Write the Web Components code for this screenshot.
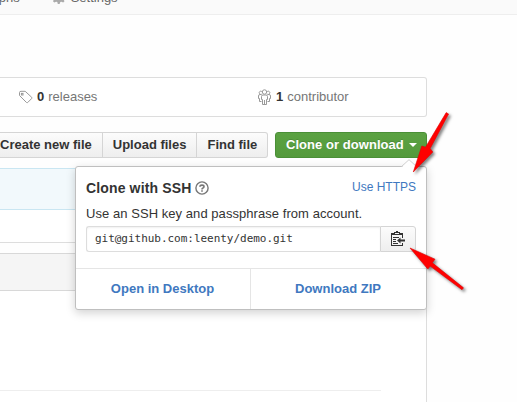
<!DOCTYPE html>
<html lang="en">
<head>
<meta charset="utf-8">
<title>Clone or download</title>
<style>
html,body{margin:0;background:#fefefe}
body{width:517px;height:402px;overflow:hidden;font:13px/18px "Liberation Sans",Arial,sans-serif;color:#333}
</style>
</head>
<body>
<repo-page></repo-page>
<script>
function define(name, markup){
  customElements.define(name, class extends HTMLElement{
    constructor(){
      super();
      const t=document.createElement('template');
      t.innerHTML=markup;
      this.attachShadow({mode:'open'}).append(t.content.cloneNode(true));
    }
  });
}

define('repo-nav',`<style>
:host{display:flex;align-items:flex-end;height:14px;box-sizing:content-box;background:#fafafa;border-bottom:1px solid #eee;overflow:hidden;color:#666}
.tabs{display:flex;align-items:center;margin:0 0 7px -23px;height:18px;line-height:18px}
svg{margin:0 5px 2px 32px;display:block}
</style>
<div class="tabs"><span>Graphs</span><svg width="14" height="16" viewBox="0 0 14 16" fill="#aaa"><path fill-rule="evenodd" d="M14 8.8V7l-2-.6-.4-1.100.9-1.800L11.200 2.200l-1.800.9-1.100-.4L7.600.700H5.800l-.5 2-1.200.4-1.800-.9L1 3.500l.9 1.800-.4 1.100-2 .6v1.800l2 .6.4 1.100L1 12.300l1.300 1.300 1.800-.9 1.200.4.5 2h1.800l.7-2 1.100-.4 1.800.9 1.300-1.300-.9-1.800.4-1.100zM6.800 11a3 3 0 110-6 3 3 0 010 6z"/></svg><span>Settings</span></div>`);

define('stat-item',`<style>
:host{display:flex;align-items:center;color:#767676}
b{color:#333;margin-right:4px}
::slotted(svg){display:block;margin-right:4px}
</style><slot name="icon"></slot><b><slot name="count"></slot></b><span><slot></slot></span>`);

define('stats-bar',`<style>
:host{display:grid;grid-template-columns:238px 1fr;align-items:center;height:40px;box-sizing:border-box;border:1px solid #ddd;border-left:0;border-radius:0 3px 3px 0;padding-left:18px;background:#fff}
</style>
<stat-item><svg slot="icon" width="15" height="16" viewBox="0 0 15 16" fill="none" stroke="#999" stroke-width="1"><path d="M1.500 3.500v3l7 7q.6.500 1.200 0l4-4q.500-.6 0-1.200l-6.500-6H3Q1.500 2.300 1.500 3.500z"/><rect x="3.400" y="4.400" width="1.600" height="1.600"/></svg><span slot="count">0</span>releases</stat-item>
<stat-item><svg slot="icon" width="16" height="16" viewBox="0 0 16 16" fill="none" stroke="#999" stroke-width="1"><path d="M6.500 15.500v-5h-1v-3q0-1.500 1.500-1.500h3q1.500 0 1.500 1.500v3h-1v5zM5.500 12.500h-2v-3h-1V7Q2.500 5.500 4 5.500h1.500M11.500 12.500h2v-3h1V7q0-1.500-1.500-1.500h-1.500M8.500 11v4"/><circle cx="8.500" cy="3" r="2.200"/><path d="M5.500 5.200a1.600 1.600 0 11.300-2.700M11.500 5.200a1.600 1.600 0 10-.3-2.700"/></svg><span slot="count">1</span>contributor</stat-item>`);

define('tool-button',`<style>
:host{display:block;box-sizing:border-box;height:26px;padding:0 10px;font-weight:700;line-height:24px;white-space:nowrap;color:#333;border:1px solid #d5d5d5;border-left:0;background:linear-gradient(#fcfcfc,#eee)}
:host([last]){border-radius:0 3px 3px 0}
:host([primary]){display:flex;align-items:center;gap:5px;margin-left:auto;color:#fff;border:1px solid #4a8f37;border-radius:3px;background:linear-gradient(#5ba242,#549a3c);text-shadow:0 -1px 0 rgba(0,0,0,.15);width:152px}
:host([primary]) span{letter-spacing:.05px}
i{display:none;border:4px solid transparent;border-top-color:#fff;border-bottom:0}
:host([primary]) i{display:block}
</style><span><slot></slot></span><i></i>`);

define('tool-row',`<style>
:host{display:flex;height:26px}
.first{margin-left:-10px}
</style>
<tool-button class="first">Create new file</tool-button><tool-button>Upload files</tool-button><tool-button last>Find file</tool-button><tool-button primary>Clone or download</tool-button>`);

define('file-panels',`<style>
:host{display:block}
div{box-sizing:border-box;border-right:1px solid #ddd}
.commit{height:42px;background:#f2f9fc;border:1px solid #c9e6f2;border-left:0;border-radius:0 3px 0 0}
.files{height:33px;border-bottom:1px solid #ddd;background:#fff}
.head{margin-top:10px;height:38px;background:#f5f5f5;border:1px solid #d8d8d8;border-left:0;border-radius:0 3px 0 0}
.readme{height:112px;padding:99px 45px 0 0;background:#fff}
hr{margin:0;border:0;height:1px;background:#eee}
</style><div class="commit"></div><div class="files"></div><div class="head"></div><div class="readme"><hr></div>`);

define('clone-popover',`<style>
:host{display:flex;flex-direction:column;box-sizing:border-box;width:352px;height:144px;border:1px solid #bfbfbf;border-radius:3px;background:#fff;box-shadow:0 3px 10px rgba(0,0,0,.18);position:relative}
.caret{position:absolute;right:9px;top:-8px;display:block}
.body{flex:none;height:101px;box-sizing:border-box;padding:11px 10px 0}
.title{display:flex;align-items:center;height:20px}
h4{font-size:14px;line-height:20px;margin:0;letter-spacing:.14px}
.title svg{margin-left:4px}
a{color:#4078c0}
.title a{margin-left:auto;font-size:12px;position:relative;top:-1px}
p{margin:7px 0 3px;line-height:18px;white-space:nowrap;letter-spacing:.055px}
.field{display:flex;height:26px}
.url{flex:1;box-sizing:border-box;border:1px solid #ddd;border-right:0;border-radius:3px 0 0 3px;padding-left:8px;font:11px/24px "DejaVu Sans Mono",monospace;letter-spacing:-.03px;box-shadow:inset 0 1px 2px rgba(0,0,0,.06)}
.copy{width:36px;box-sizing:border-box;border:1px solid #d5d5d5;border-radius:0 3px 3px 0;background:linear-gradient(#fcfcfc,#eee);display:grid;place-items:center}
.actions{display:grid;grid-template-columns:174px 1fr;flex:1;border-top:1px solid #e5e5e5;text-align:center;font-weight:700;line-height:40px}
.actions a+a{border-left:1px solid #e5e5e5}
.actions a{padding-right:1px}
</style>
<svg class="caret" width="16" height="9" viewBox="0 0 16 9"><path d="M1 9V8L8 1l7 7v1z" fill="#fff"/><path d="M.5 7.500L8 .7l7.500 6.800" fill="none" stroke="#d0d0d0"/></svg>
<div class="body">
<div class="title"><h4>Clone with SSH</h4><svg width="14" height="14" viewBox="0 0 14 14" fill="none" stroke="#777" stroke-width="1.400"><circle cx="7" cy="7" r="6.100"/><path d="M4.900 5.800Q5 4.100 7 4.100t2 1.600Q9 6.600 7.600 7.200 7 7.500 7 8.500M7 9.300v1.500" stroke-width="1.600"/></svg><a>Use HTTPS</a></div>
<p>Use an SSH key and passphrase from account.</p>
<div class="field"><div class="url">git@github.com:leenty/demo.git</div><div class="copy"><svg width="14" height="16" viewBox="0 0 14 16" fill="#333"><path d="M0 2h3V1h2V0h2v1h2v1h3v5h-1V4H1v10h10v-2h1v3H0z"/><path d="M4 2h4v1H4z" fill="#f6f6f6"/><path d="M2 6h6v1H2zM2 8h3v1H2zM2 10h3v1H2zM2 12h5v1H2zM6 9.500L9.500 6.500v2H14v2H9.500v2z"/></svg></div></div>
</div>
<div class="actions"><a>Open in Desktop</a><a>Download ZIP</a></div>`);

define('pointer-arrows',`<style>
:host{display:block;pointer-events:none}
svg{display:block;overflow:visible;filter:drop-shadow(2px 2px 1.500px rgba(0,0,0,.5))}
</style>
<svg width="517" height="402" viewBox="0 0 517 402" fill="#f00" stroke="#e00000" stroke-width=".6" stroke-linejoin="round"><path d="M446.200 112.600L448.600 114l-18.400 34.500 2.600 3.500L413.300 172l8.500-26 3.700 1.200z"/><path d="M410 248l25 11.200-2.700 3.600 31.200 25-1.500 1.900-31.800-23.600-2.400 3z"/></svg>`);

define('repo-page',`<style>
:host{display:block;position:relative;width:517px;height:402px;overflow:hidden}
.content{display:block;width:427px}
stats-bar{margin-top:62px}
tool-row{margin-top:15px}
file-panels{margin-top:10px}
clone-popover{position:absolute;left:75px;top:166px}
pointer-arrows{position:absolute;left:0;top:0}
</style>
<repo-nav></repo-nav><div class="content"><stats-bar></stats-bar><tool-row></tool-row><file-panels></file-panels></div>
<clone-popover></clone-popover><pointer-arrows></pointer-arrows>`);
</script>
</body>
</html>
